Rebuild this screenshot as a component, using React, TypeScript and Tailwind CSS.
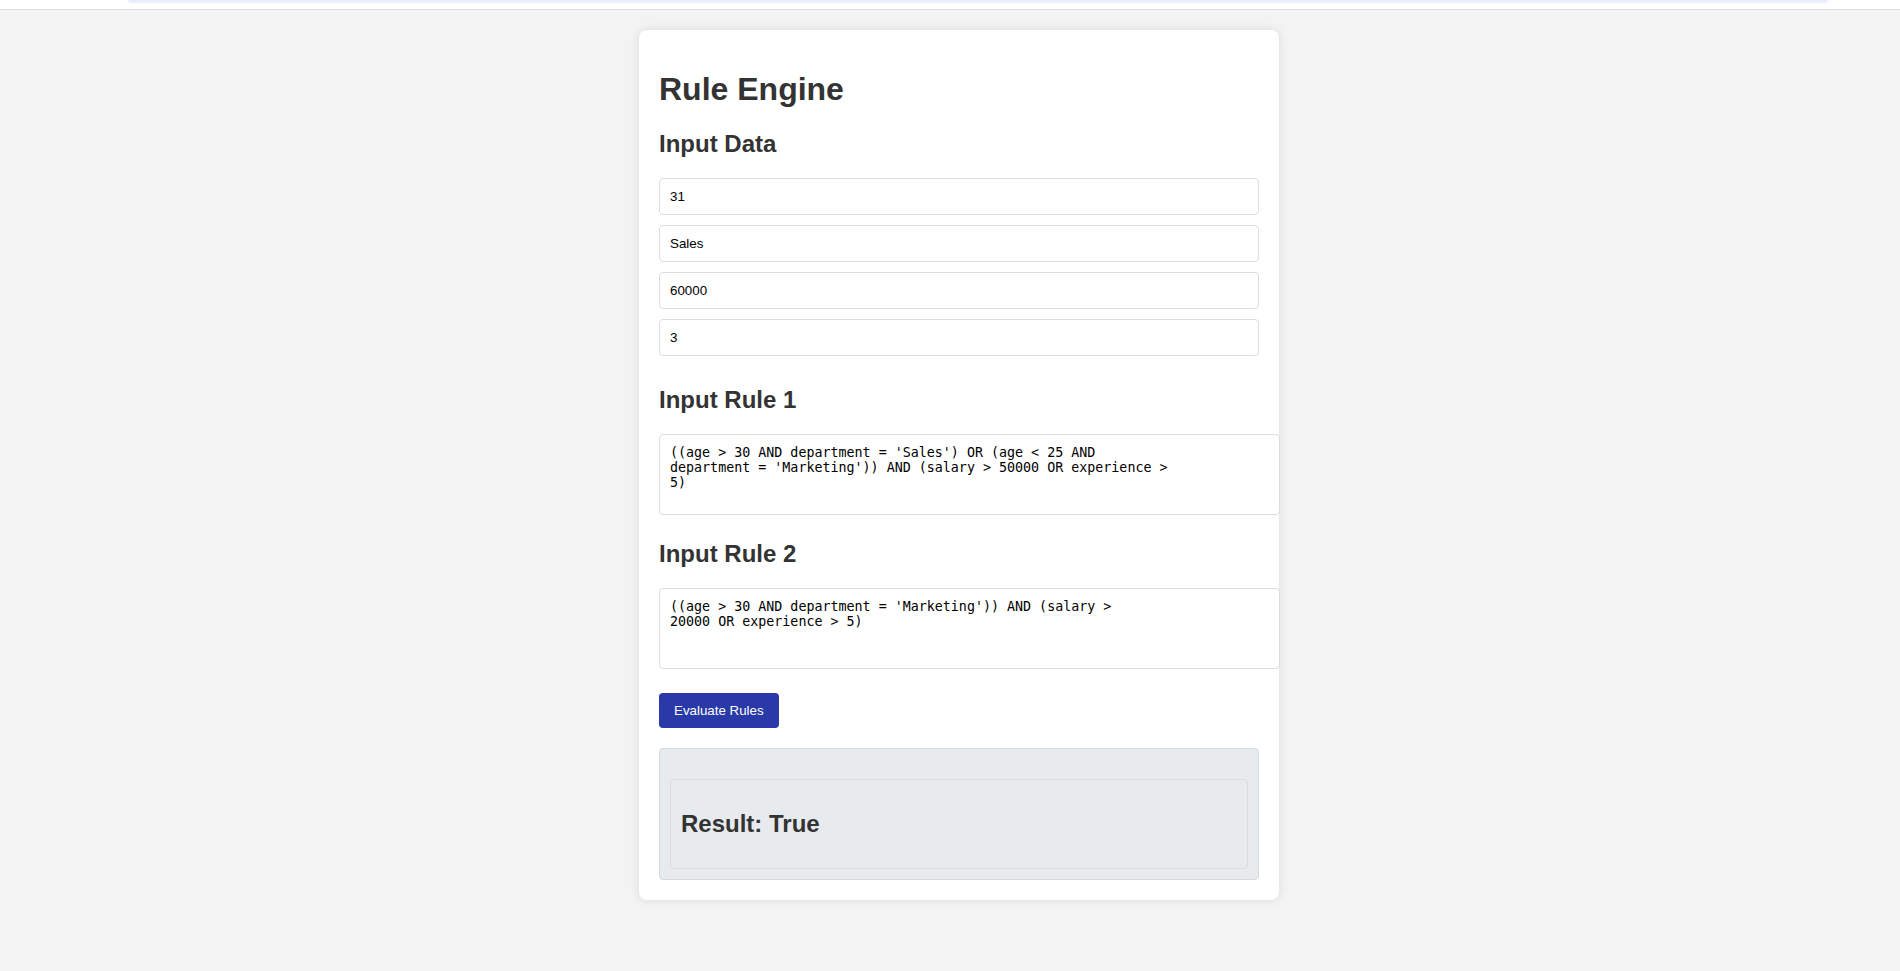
import React from "react";

const rule1 =
  "((age > 30 AND department = 'Sales') OR (age < 25 AND\ndepartment = 'Marketing')) AND (salary > 50000 OR experience >\n5)";
const rule2 =
  "((age > 30 AND department = 'Marketing')) AND (salary >\n20000 OR experience > 5)";

export default function App() {
  const values = ["31", "Sales", "60000", "3"];
  return (
    <div className="h-screen overflow-hidden bg-[#f3f3f3] font-['Liberation_Sans',Arial,sans-serif] text-[#333]">
      <div className="h-[10px] bg-white border-b border-[#dddddd]">
        <div className="ml-[128px] w-[1700px] h-[3px] rounded-b-[6px] bg-[#e8effa]" />
      </div>
      <div className="flex justify-center pl-[18px] pt-[20px]">
        <div className="w-[640px] bg-white rounded-[8px] p-[20px] shadow-[0_0_10px_rgba(0,0,0,0.1)]">
          <h1 className="mt-[21px] text-[32px] leading-[37px] font-bold text-[#333]">Rule Engine</h1>
          <h2 className="mt-[22px] text-[24px] leading-[28px] font-bold text-[#333]">Input Data</h2>
          <div className="mt-[20px] flex flex-col gap-[10px]">
            {values.map((v) => (
              <input
                key={v}
                defaultValue={v}
                className="block w-full h-[37px] px-[10px] border border-[#dddddd] rounded-[4px] text-[13.33px] leading-[15px] text-black font-['Liberation_Sans',Arial,sans-serif] outline-none"
              />
            ))}
          </div>
          <h2 className="mt-[30px] text-[24px] leading-[28px] font-bold text-[#333]">Input Rule 1</h2>
          <textarea
            defaultValue={rule1}
            className="block mt-[20px] w-[621px] h-[81px] p-[10px] border border-[#dddddd] rounded-[4px] bg-white font-['DejaVu_Sans_Mono',monospace] text-[13.33px] leading-[15px] text-black resize-none outline-none whitespace-pre overflow-hidden"
          />
          <h2 className="mt-[25px] text-[24px] leading-[28px] font-bold text-[#333]">Input Rule 2</h2>
          <textarea
            defaultValue={rule2}
            className="block mt-[20px] w-[621px] h-[81px] p-[10px] border border-[#dddddd] rounded-[4px] bg-white font-['DejaVu_Sans_Mono',monospace] text-[13.33px] leading-[15px] text-black resize-none outline-none whitespace-pre overflow-hidden"
          />
          <button className="mt-[24px] h-[35px] px-[15px] rounded-[4px] bg-[#2939a8] text-white text-[13.33px] leading-[15px] font-['Liberation_Sans',Arial,sans-serif]">
            Evaluate Rules
          </button>
          <div className="mt-[20px] p-[10px] bg-[#e8ebee] border border-[#d6d9dc] rounded-[4px]">
            <div className="mt-[20px] p-[10px] border border-[#dadde0] rounded-[4px]">
              <h2 className="my-[20px] text-[24px] leading-[28px] font-bold text-[#333]">Result: True</h2>
            </div>
          </div>
        </div>
      </div>
    </div>
  );
}
